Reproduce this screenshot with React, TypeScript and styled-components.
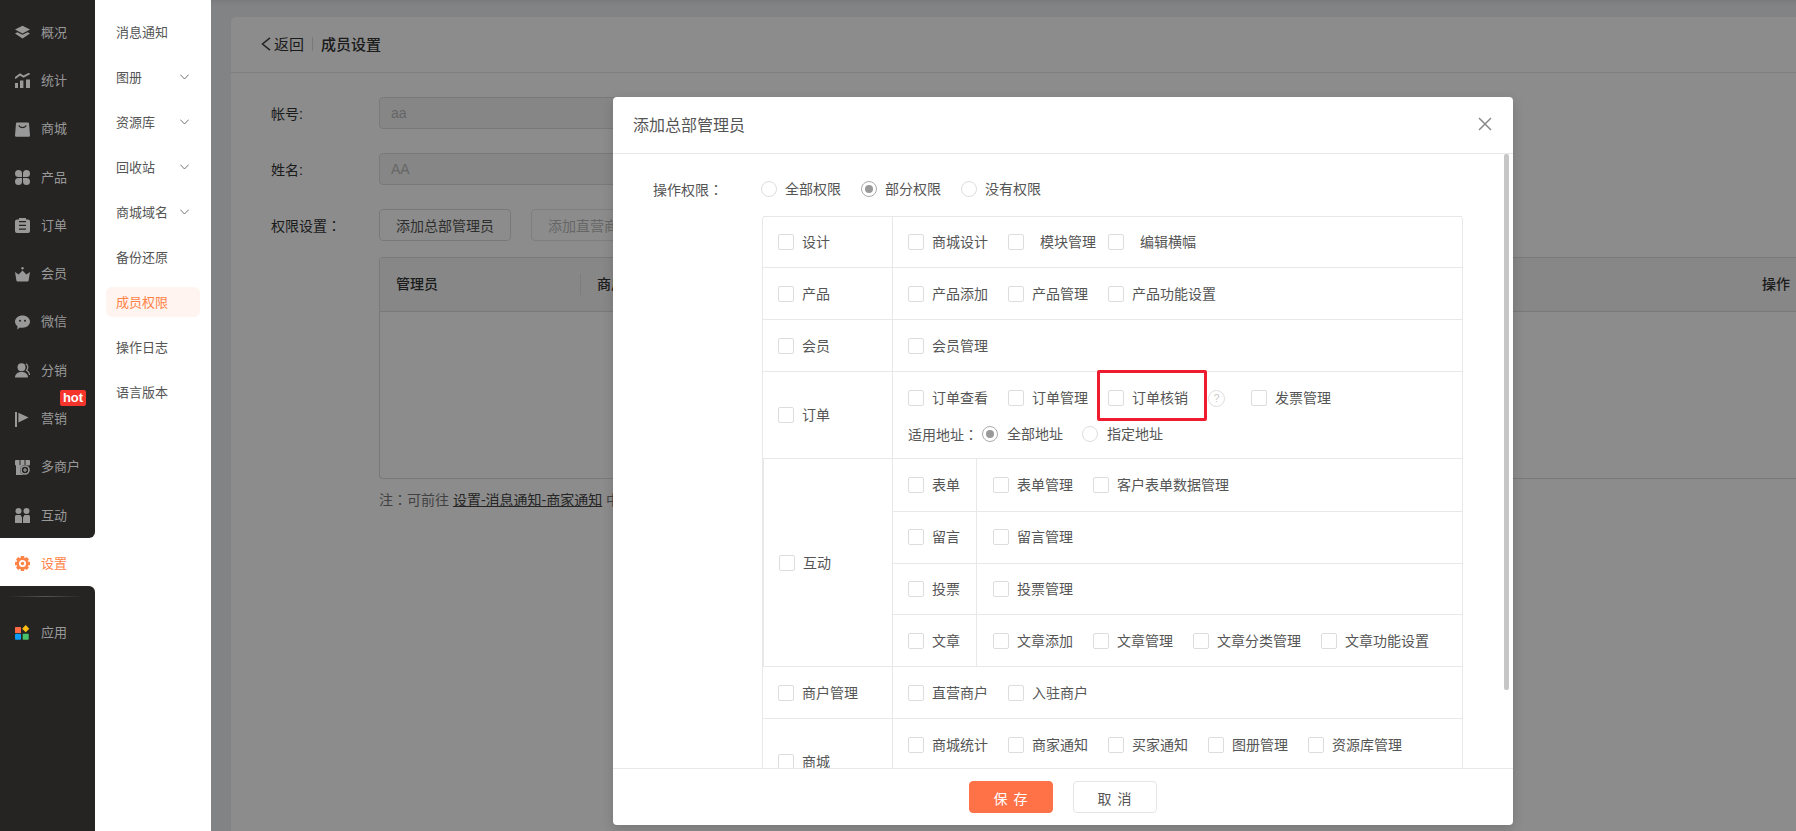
import React from "react";
import styled, { createGlobalStyle } from "styled-components";

const GlobalStyle = createGlobalStyle`
  html, body { margin: 0; padding: 0; background: #fff; }
  body { font-family: "Liberation Sans", "Noto Sans CJK SC", sans-serif; font-size: 14px; color: #555; }
  * { box-sizing: border-box; }
`;

const DARK = "#252423";
const LINE = "#e8e8e8";

const Page = styled.div`
  position: relative;
  display: flex;
  width: 1796px;
  height: 831px;
  overflow: hidden;
`;

/* full-width colon sitting in the middle of its cell */
const Colon = styled.span`
  font-family: "Noto Sans CJK TC", sans-serif;
`;

/* ---------- icon rail ---------- */
const Rail = styled.nav`
  width: 95px;
  flex: none;
  display: flex;
  flex-direction: column;
  background: #fff;
`;
const RailTop = styled.div`
  background: ${DARK};
  padding-top: 7px;
  border-bottom-right-radius: 6px;
`;
const RailBottom = styled.div`
  flex: 1;
  background: ${DARK};
  padding-top: 10px;
  border-top-right-radius: 6px;
`;
const RailDivider = styled.div`
  height: 1px;
  margin: 0 12px 10px 8px;
  background: linear-gradient(90deg, transparent, #555 50%, transparent);
`;
const RailItem = styled.div<{ $active?: boolean }>`
  position: relative;
  display: flex;
  align-items: center;
  gap: 11px;
  height: ${(p) => (p.$active ? "48px" : "48.3px")};
  padding: 3px 0 0 15px;
  font-size: 13px;
  line-height: 18px;
  color: ${(p) => (p.$active ? "#ff8347" : "#999")};
  background: ${(p) => (p.$active ? "#fff" : "transparent")};
`;
const Hot = styled.span`
  position: absolute;
  left: 60px;
  top: -3px;
  width: 26px;
  height: 16px;
  border-radius: 2px;
  background: #f5352b;
  color: #fff;
  font-size: 13px;
  font-weight: 700;
  line-height: 16px;
  text-align: center;
`;
const IconSvg = styled.svg`
  width: 15px;
  height: 15px;
  flex: none;
  display: block;
`;

const ic = (children: React.ReactNode) => (
  <IconSvg viewBox="0 0 15 15" fill="currentColor">
    {children}
  </IconSvg>
);

const icons: Record<string, React.ReactNode> = {
  layers: ic(
    <>
      <path d="M7.5 0.8 15 4.6 7.5 8.4 0 4.6Z" />
      <path d="M0 8.4 2.4 7.2 7.5 9.8 12.6 7.2 15 8.4 7.5 13.4Z" />
    </>
  ),
  chart: ic(
    <>
      <rect x="0" y="10" width="3" height="5" />
      <rect x="5" y="7.5" width="3.4" height="7.5" />
      <rect x="11" y="6.5" width="4" height="8.5" />
      <path d="M0 5.2 5 1.4 8.5 3.6 14.6 0.4" fill="none" stroke="currentColor" strokeWidth="1.9" />
    </>
  ),
  bag: ic(
    <>
      <path d="M2 0.4h11a1 1 0 0 1 1 .8l1 12.2a1.2 1.2 0 0 1-1.2 1.3H1.2A1.2 1.2 0 0 1 0 13.4L1 1.2a1 1 0 0 1 1-.8z" />
      <path d="M3.8 3.6c1.2 2.6 6.2 2.6 7.4 0" fill="none" stroke={DARK} strokeWidth="1.3" />
    </>
  ),
  petals: ic(
    <>
      <path d="M3.5 0A3.5 3.5 0 0 1 7 3.5V7H3.5a3.5 3.5 0 0 1 0-7z" />
      <path d="M11.5 0A3.5 3.5 0 0 0 8 3.5V7h3.5a3.5 3.5 0 0 0 0-7z" />
      <path d="M3.5 15A3.5 3.5 0 0 0 7 11.5V8H3.5a3.5 3.5 0 0 0 0 7z" />
      <path d="M11.5 15A3.5 3.5 0 0 1 8 11.5V8h3.5a3.5 3.5 0 0 1 0 7z" />
    </>
  ),
  clip: ic(
    <>
      <path d="M4 0h7v1.4h2A2 2 0 0 1 15 3.4v9.6a2 2 0 0 1-2 2H2a2 2 0 0 1-2-2V3.4a2 2 0 0 1 2-2h2z" />
      <path d="M4 3.6h7M4 7.4h7M4 11.2h7" stroke={DARK} strokeWidth="1.3" />
    </>
  ),
  crown: ic(
    <>
      <circle cx="7.5" cy="1.2" r="1.2" />
      <path d="M0 5 3.6 7.6 7.5 3.4 11.4 7.6 15 5 13.6 13.4a1.2 1.2 0 0 1-1.2 1H2.6a1.2 1.2 0 0 1-1.2-1Z" />
    </>
  ),
  wechat: ic(
    <>
      <path d="M7.5 0.4C11.6 0.4 15 3 15 6.6s-3.4 6.2-7.5 6.2c-.9 0-1.8-.1-2.6-.4L2.2 14.4l.4-3C1 10.2 0 8.5 0 6.6 0 3 3.4 0.4 7.5 0.4z" />
      <circle cx="5" cy="5.8" r="1" fill={DARK} />
      <circle cx="10" cy="5.8" r="1" fill={DARK} />
    </>
  ),
  user: ic(
    <>
      <circle cx="6.5" cy="4.2" r="4" />
      <path d="M0 14.6c0-3.6 2.8-5.6 6.5-5.6s6.5 2 6.5 5.6z" />
      <path d="M10.8 .8c2.2 1 2.8 4.2.7 6.4 1.7.9 2.8 2.6 3.1 4.8" fill="none" stroke="currentColor" strokeWidth="1.2" />
    </>
  ),
  flag: ic(
    <>
      <rect x="0" y="0" width="2" height="15" />
      <path d="M3.4 0.8 13.6 5.6 3.4 10.4Z" />
    </>
  ),
  store: ic(
    <>
      <path d="M1 0h13a1 1 0 0 1 1 1v3.6a1 1 0 0 1-1 1H1a1 1 0 0 1-1-1V1a1 1 0 0 1 1-1z" />
      <path d="M5 0v5M10 0v5" stroke={DARK} strokeWidth="1" />
      <rect x="1" y="5" width="7" height="10" />
      <circle cx="10" cy="10" r="5" fill={DARK} />
      <circle cx="10" cy="10" r="4" fill="none" stroke="currentColor" strokeWidth="1.6" />
      <path d="M8 10h4M10 8v4" stroke="currentColor" strokeWidth="1.2" />
    </>
  ),
  duo: ic(
    <>
      <circle cx="3.5" cy="3" r="3" />
      <circle cx="11.5" cy="3" r="3" />
      <path d="M1.5 7H5.5L7 9.4V15H0V8.5A1.5 1.5 0 0 1 1.5 7z" />
      <path d="M13.5 7H9.5L8 9.4V15H15V8.5A1.5 1.5 0 0 0 13.5 7z" />
    </>
  ),
  gear: ic(
    <>
      {[0, 45, 90, 135, 180, 225, 270, 315].map((a) => (
        <rect key={a} x="5.7" y="0" width="3.6" height="3" rx="0.6" transform={`rotate(${a} 7.5 7.5)`} />
      ))}
      <circle cx="7.5" cy="7.5" r="6" />
      <circle cx="7.5" cy="7.5" r="3.5" fill="#fff" />
      <circle cx="7.5" cy="7.5" r="1.7" />
    </>
  ),
  apps: ic(
    <>
      <rect x="0" y="2" width="6" height="6" rx="0.6" fill="#ff6a45" />
      <rect x="0" y="8.7" width="6" height="6" rx="0.8" fill="#0a9bf5" />
      <rect x="7.7" y="8.7" width="6" height="6" rx="0.8" fill="#47c26b" />
      <path d="M10.7 0.1 14.3 3.7 10.7 7.3 7.1 3.7Z" fill="#fdbc11" />
    </>
  ),
};

const railItems: { label: string; icon: string; hot?: boolean }[] = [
  { label: "概况", icon: "layers" },
  { label: "统计", icon: "chart" },
  { label: "商城", icon: "bag" },
  { label: "产品", icon: "petals" },
  { label: "订单", icon: "clip" },
  { label: "会员", icon: "crown" },
  { label: "微信", icon: "wechat" },
  { label: "分销", icon: "user" },
  { label: "营销", icon: "flag", hot: true },
  { label: "多商户", icon: "store" },
  { label: "互动", icon: "duo" },
];

/* ---------- second column ---------- */
const SubNav = styled.nav`
  width: 116px;
  flex: none;
  display: flex;
  flex-direction: column;
  gap: 15px;
  padding: 17px 11px 0;
  background: #fff;
`;
const SubItem = styled.div<{ $active?: boolean }>`
  display: flex;
  align-items: center;
  justify-content: space-between;
  height: 30px;
  padding: 0 11px 0 10px;
  border-radius: 6px;
  font-size: 13px;
  color: ${(p) => (p.$active ? "#ff8347" : "#555")};
  background: ${(p) => (p.$active ? "#fff4ef" : "transparent")};
`;
const SubLabel = styled.span`
  margin-top: -2px;
`;
const Chevron = () => (
  <svg width="9" height="6" viewBox="0 0 9 6" fill="none" stroke="#666" strokeWidth="0.9">
    <path d="M0.3 0.6 4.5 5 8.7 0.6" />
  </svg>
);
const subItems: { label: string; more?: boolean; active?: boolean }[] = [
  { label: "消息通知" },
  { label: "图册", more: true },
  { label: "资源库", more: true },
  { label: "回收站", more: true },
  { label: "商城域名", more: true },
  { label: "备份还原" },
  { label: "成员权限", active: true },
  { label: "操作日志" },
  { label: "语言版本" },
];

/* ---------- main page under the mask ---------- */
const Main = styled.main`
  flex: 1;
  min-width: 0;
  padding: 17px 0 0 20px;
  background: #edeef1;
  box-shadow: inset 0 7px 7px -7px rgba(0, 0, 0, 0.12);
`;
const Panel = styled.section`
  height: 100%;
  background: #fff;
  border-top-left-radius: 5px;
`;
const PanelHeader = styled.header`
  display: flex;
  align-items: center;
  height: 56px;
  padding: 0 0 2px 30px;
  border-bottom: 1px solid ${LINE};
  font-size: 15px;
  color: #333;
`;
const BackLabel = styled.span`
  margin-left: 3px;
`;
const HeaderDivider = styled.span`
  width: 1px;
  height: 14px;
  margin: 0 8px;
  background: #ddd;
`;
const HeaderTitle = styled.span`
  font-weight: 500;
`;
const Form = styled.div`
  display: flex;
  flex-direction: column;
  gap: 24px;
  padding: 24px 0 0 40px;
`;
const FormRow = styled.div`
  display: flex;
  align-items: center;
  height: 32px;
`;
const FormLabel = styled.label`
  width: 108px;
  flex: none;
  font-size: 14px;
  color: #333;
`;
const FieldInput = styled.input`
  width: 400px;
  height: 32px;
  padding: 0 11px;
  border: 1px solid #ddd;
  border-radius: 4px;
  background: #f5f5f5;
  color: #bbb;
  font: inherit;
  font-size: 14px;
`;
const OutlineButton = styled.button<{ $disabled?: boolean }>`
  height: 32px;
  padding: 0 16px;
  margin-right: 20px;
  border: 1px solid ${(p) => (p.$disabled ? "#e5e5e5" : "#ddd")};
  border-radius: 4px;
  background: #fff;
  color: ${(p) => (p.$disabled ? "#bbb" : "#555")};
  font: inherit;
  font-size: 14px;
  white-space: nowrap;
`;
const MemberTable = styled.div`
  height: 222px;
  margin: -8px 0 0 108px;
  border: 1px solid #ddd;
  border-right: 0;
  border-radius: 4px 0 0 4px;
`;
const MemberHead = styled.div`
  display: flex;
  align-items: center;
  height: 54px;
  background: #f6f6f6;
  border-bottom: 1px solid #ddd;
  font-weight: 500;
  color: #333;
`;
const MemberCol = styled.div`
  width: 201px;
  padding-left: 16px;
  border-right: 1px solid #e4e4e4;
  line-height: 21px;
`;
const MemberColRest = styled.div`
  flex: 1;
  padding-left: 16px;
  line-height: 21px;
`;
const MemberColAction = styled.div`
  padding-right: 6px;
  line-height: 21px;
`;
const Note = styled.p`
  margin: -15px 0 0 108px;
  font-size: 14px;
  line-height: 22px;
  color: #777;
  white-space: nowrap;
`;
const NoteLink = styled.a`
  color: #444;
  text-decoration: underline;
`;

/* ---------- modal ---------- */
const Mask = styled.div`
  position: absolute;
  left: 211px;
  top: 0;
  right: 0;
  bottom: 0;
  padding: 97px 0 0 402px;
  background: rgba(0, 0, 0, 0.45);
`;
const Modal = styled.div`
  display: flex;
  flex-direction: column;
  width: 900px;
  height: 728px;
  background: #fff;
  border-radius: 4px;
  box-shadow: 0 4px 12px rgba(0, 0, 0, 0.15);
`;
const ModalHeader = styled.header`
  display: flex;
  align-items: center;
  justify-content: space-between;
  height: 57px;
  flex: none;
  padding: 0 21px 2px 20px;
  border-bottom: 1px solid ${LINE};
`;
const ModalTitle = styled.h2`
  margin: 0;
  font-size: 16px;
  font-weight: 400;
  color: #555;
`;
const ModalBody = styled.div`
  position: relative;
  flex: 1;
  min-height: 0;
  overflow: hidden;
  padding: 24px 0 0 40px;
`;
const ScrollThumb = styled.div`
  position: absolute;
  left: 891px;
  top: 0;
  width: 5px;
  height: 536px;
  border-radius: 2px;
  background: #c6c6c6;
`;
const ModalFooter = styled.footer`
  display: flex;
  justify-content: center;
  gap: 20px;
  height: 57px;
  flex: none;
  padding-top: 12px;
  border-top: 1px solid ${LINE};
`;
const FooterButton = styled.button<{ $primary?: boolean }>`
  width: 84px;
  height: 32px;
  padding: 2px 0 0;
  border: 1px solid ${(p) => (p.$primary ? "#ff7248" : "#e5e5e5")};
  border-radius: 4px;
  background: ${(p) => (p.$primary ? "#ff7248" : "#fff")};
  color: ${(p) => (p.$primary ? "#fff" : "#555")};
  font: inherit;
  font-size: 14px;
  letter-spacing: 1px;
`;
const PermissionLine = styled.div`
  display: flex;
  align-items: center;
  height: 22px;
  margin-bottom: 16px;
`;
const PermissionLabel = styled.div`
  width: 108px;
  flex: none;
`;
const RadioOption = styled.span<{ $wide?: boolean }>`
  display: inline-flex;
  align-items: center;
  gap: ${(p) => (p.$wide ? "9px" : "8px")};
  padding-right: ${(p) => (p.$wide ? "19px" : "20px")};
  line-height: 22px;
  white-space: nowrap;
`;
const RadioDot = styled.i<{ $on?: boolean }>`
  display: flex;
  align-items: center;
  justify-content: center;
  width: 16px;
  height: 16px;
  flex: none;
  border: 1px solid ${(p) => (p.$on ? "#aaa" : "#ddd")};
  border-radius: 50%;
  &::after {
    content: "";
    display: ${(p) => (p.$on ? "block" : "none")};
    width: 8px;
    height: 8px;
    border-radius: 50%;
    background: #999;
  }
`;
const Tree = styled.div`
  width: 701px;
  margin-left: 109px;
  border-left: 1px solid ${LINE};
  border-right: 1px solid ${LINE};
  border-radius: 4px 4px 0 0;
`;
const Row = styled.div<{ $h: number }>`
  position: relative;
  display: flex;
  height: ${(p) => p.$h}px;
  border-top: 1px solid ${LINE};
`;
const LeadCell = styled.div<{ $inset?: boolean }>`
  display: flex;
  align-items: center;
  width: 130px;
  flex: none;
  padding-left: 15px;
  border-right: 1px solid ${LINE};
  border-left: ${(p) => (p.$inset ? `1px solid ${LINE}` : "0")};
`;
const ItemsCell = styled.div<{ $nested?: boolean }>`
  flex: 1;
  display: flex;
  align-items: center;
  padding-left: ${(p) => (p.$nested ? "16px" : "15px")};
`;
const StackCell = styled.div`
  flex: 1;
  display: flex;
  flex-direction: column;
  gap: 14px;
  padding: 15px 0 0 15px;
`;
const Line = styled.div`
  display: flex;
  align-items: center;
  height: 22px;
`;
const SubRows = styled.div`
  flex: 1;
  display: flex;
  flex-direction: column;
`;
const SubRow = styled.div<{ $first?: boolean }>`
  display: flex;
  height: 52px;
  border-top: ${(p) => (p.$first ? "0" : `1px solid ${LINE}`)};
`;
const SubLead = styled.div`
  display: flex;
  align-items: center;
  width: 84px;
  flex: none;
  padding-left: 15px;
  border-right: 1px solid ${LINE};
`;
const CheckItem = styled.label`
  display: inline-flex;
  align-items: center;
  gap: 8px;
  padding-right: 20px;
  line-height: 22px;
  white-space: nowrap;
`;
const Box = styled.i`
  display: block;
  width: 16px;
  height: 16px;
  flex: none;
  border: 1px solid #ddd;
  border-radius: 2px;
  background: #fff;
`;
const CheckText = styled.span<{ $shift?: number }>`
  margin-left: ${(p) => p.$shift ?? 0}px;
  margin-right: ${(p) => -(p.$shift ?? 0)}px;
`;
const Help = styled.span`
  display: flex;
  align-items: center;
  justify-content: center;
  width: 17px;
  height: 17px;
  flex: none;
  margin-right: 26px;
  border: 1px solid #ddd;
  border-radius: 50%;
  color: #ccc;
  font-size: 11px;
  line-height: 1;
`;
const AddressLabel = styled.span`
  margin-right: 4px;
  white-space: nowrap;
`;
const Highlight = styled.div`
  position: absolute;
  left: 334px;
  top: -2px;
  width: 110px;
  height: 51px;
  border: 3px solid #ee1c2e;
  border-radius: 2px;
  pointer-events: none;
`;

const Check = ({ label, shift }: { label: string; shift?: number }) => (
  <CheckItem>
    <Box />
    <CheckText $shift={shift}>{label}</CheckText>
  </CheckItem>
);
const Radio = ({ label, on, wide }: { label: string; on?: boolean; wide?: boolean }) => (
  <RadioOption $wide={wide}>
    <RadioDot $on={on} />
    {label}
  </RadioOption>
);

const PlainRow = ({ lead, items, h }: { lead: string; items: string[]; h: number }) => (
  <Row $h={h}>
    <LeadCell>
      <Check label={lead} />
    </LeadCell>
    <ItemsCell>
      {items.map((t) => (
        <Check key={t} label={t} />
      ))}
    </ItemsCell>
  </Row>
);

const engage: { lead: string; items: string[] }[] = [
  { lead: "表单", items: ["表单管理", "客户表单数据管理"] },
  { lead: "留言", items: ["留言管理"] },
  { lead: "投票", items: ["投票管理"] },
  { lead: "文章", items: ["文章添加", "文章管理", "文章分类管理", "文章功能设置"] },
];

export default function App() {
  return (
    <>
      <GlobalStyle />
      <Page>
        <Rail>
          <RailTop>
            {railItems.map((r) => (
              <RailItem key={r.label}>
                {icons[r.icon]}
                <span>{r.label}</span>
                {r.hot && <Hot>hot</Hot>}
              </RailItem>
            ))}
          </RailTop>
          <RailItem $active>
            {icons.gear}
            <span>设置</span>
          </RailItem>
          <RailBottom>
            <RailDivider />
            <RailItem>
              {icons.apps}
              <span>应用</span>
            </RailItem>
          </RailBottom>
        </Rail>

        <SubNav>
          {subItems.map((s) => (
            <SubItem key={s.label} $active={s.active}>
              <SubLabel>{s.label}</SubLabel>
              {s.more && <Chevron />}
            </SubItem>
          ))}
        </SubNav>

        <Main>
          <Panel>
            <PanelHeader>
              <svg width="10" height="14" viewBox="0 0 10 14" fill="none" stroke="#444" strokeWidth="1.5">
                <path d="M9 0.8 1.5 7 9 13.2" />
              </svg>
              <BackLabel>返回</BackLabel>
              <HeaderDivider />
              <HeaderTitle>成员设置</HeaderTitle>
            </PanelHeader>
            <Form>
              <FormRow>
                <FormLabel>帐号:</FormLabel>
                <FieldInput disabled value="aa" readOnly />
              </FormRow>
              <FormRow>
                <FormLabel>姓名:</FormLabel>
                <FieldInput disabled value="AA" readOnly />
              </FormRow>
              <FormRow>
                <FormLabel>
                  权限设置<Colon>：</Colon>
                </FormLabel>
                <OutlineButton>添加总部管理员</OutlineButton>
                <OutlineButton $disabled>添加直营商户管理员</OutlineButton>
              </FormRow>
              <MemberTable>
                <MemberHead>
                  <MemberCol>管理员</MemberCol>
                  <MemberColRest>商户</MemberColRest>
                  <MemberColAction>操作</MemberColAction>
                </MemberHead>
              </MemberTable>
              <Note>
                注<Colon>：</Colon>可前往 <NoteLink>设置-消息通知-商家通知</NoteLink> 中配置
              </Note>
            </Form>
          </Panel>
        </Main>

        <Mask>
          <Modal>
            <ModalHeader>
              <ModalTitle>添加总部管理员</ModalTitle>
              <svg width="14" height="14" viewBox="0 0 14 14" stroke="#888" strokeWidth="1.5" fill="none">
                <path d="M1 1 13 13M13 1 1 13" />
              </svg>
            </ModalHeader>
            <ModalBody>
              <PermissionLine>
                <PermissionLabel>
                  操作权限<Colon>：</Colon>
                </PermissionLabel>
                <Radio label="全部权限" />
                <Radio label="部分权限" on />
                <Radio label="没有权限" />
              </PermissionLine>
              <Tree>
                <Row $h={51}>
                  <LeadCell>
                    <Check label="设计" />
                  </LeadCell>
                  <ItemsCell>
                    <Check label="商城设计" />
                    <Check label="模块管理" shift={8} />
                    <Check label="编辑横幅" shift={8} />
                  </ItemsCell>
                </Row>
                <PlainRow h={52} lead="产品" items={["产品添加", "产品管理", "产品功能设置"]} />
                <PlainRow h={52} lead="会员" items={["会员管理"]} />
                <Row $h={87}>
                  <LeadCell>
                    <Check label="订单" />
                  </LeadCell>
                  <StackCell>
                    <Line>
                      <Check label="订单查看" />
                      <Check label="订单管理" />
                      <Check label="订单核销" />
                      <Help>?</Help>
                      <Check label="发票管理" />
                    </Line>
                    <Line>
                      <AddressLabel>
                        适用地址<Colon>：</Colon>
                      </AddressLabel>
                      <Radio label="全部地址" on wide />
                      <Radio label="指定地址" wide />
                    </Line>
                  </StackCell>
                  <Highlight />
                </Row>
                <Row $h={208}>
                  <LeadCell $inset>
                    <Check label="互动" />
                  </LeadCell>
                  <SubRows>
                    {engage.map((e, i) => (
                      <SubRow key={e.lead} $first={i === 0}>
                        <SubLead>
                          <Check label={e.lead} />
                        </SubLead>
                        <ItemsCell $nested>
                          {e.items.map((t) => (
                            <Check key={t} label={t} />
                          ))}
                        </ItemsCell>
                      </SubRow>
                    ))}
                  </SubRows>
                </Row>
                <PlainRow h={52} lead="商户管理" items={["直营商户", "入驻商户"]} />
                <Row $h={87}>
                  <LeadCell>
                    <Check label="商城" />
                  </LeadCell>
                  <StackCell>
                    <Line>
                      <Check label="商城统计" />
                      <Check label="商家通知" />
                      <Check label="买家通知" />
                      <Check label="图册管理" />
                      <Check label="资源库管理" />
                    </Line>
                  </StackCell>
                </Row>
              </Tree>
              <ScrollThumb />
            </ModalBody>
            <ModalFooter>
              <FooterButton $primary>保 存</FooterButton>
              <FooterButton>取 消</FooterButton>
            </ModalFooter>
          </Modal>
        </Mask>
      </Page>
    </>
  );
}
